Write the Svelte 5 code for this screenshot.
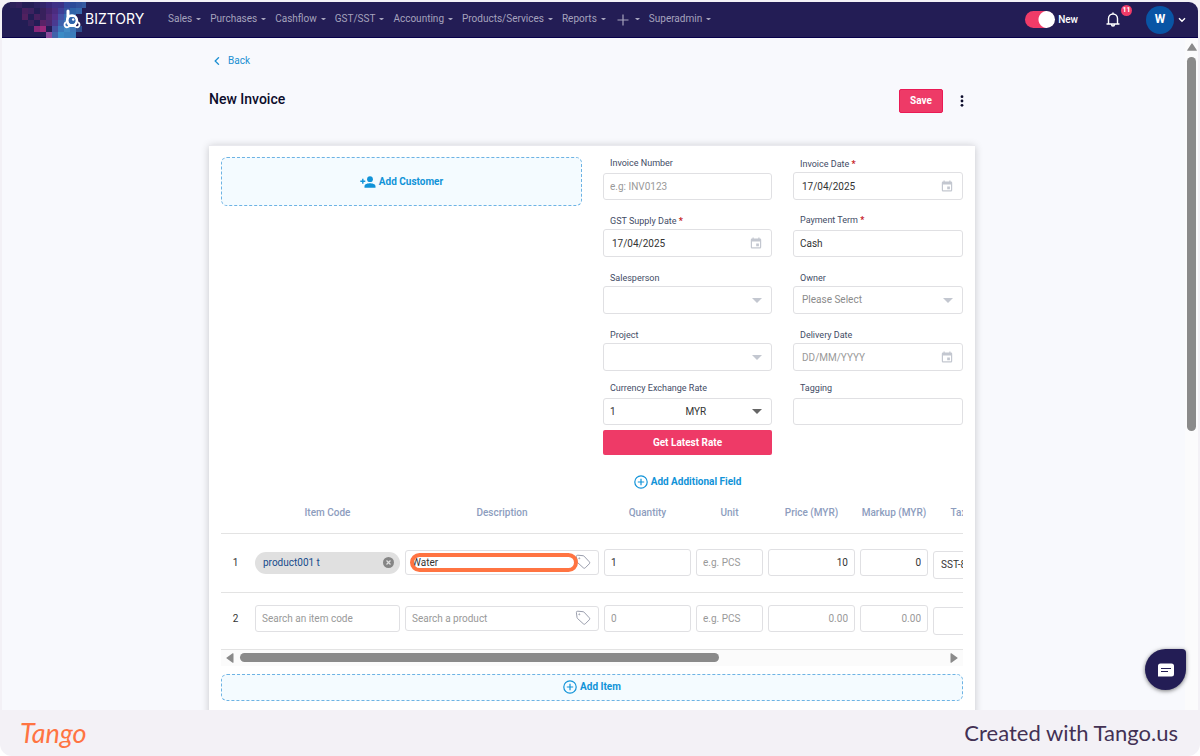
<script>
  const menus = ['Sales', 'Purchases', 'Cashflow', 'GST/SST', 'Accounting', 'Products/Services', 'Reports', '+', 'Superadmin'];

  // Mosaic behind the logo: [column, row, colour] on a 6px grid
  const mosaic = [
    [1, 0, '#2c2159'], [2, 0, '#33215d'], [5, 0, '#2b2160'], [6, 0, '#33246a'], [7, 0, '#39277a'], [8, 0, '#3f2f86'], [9, 0, '#3b3188'], [10, 0, '#33479c'], [11, 0, '#2c4b98'], [12, 0, '#32529c'], [13, 0, '#35599f'],
    [3, 1, '#47205f'], [4, 1, '#3d2260'], [6, 1, '#38215c'], [7, 1, '#45246d'], [8, 1, '#4b2c80'], [9, 1, '#403e96'], [10, 1, '#34519f'], [11, 1, '#2f63a8'], [12, 1, '#3568ac'],
    [3, 2, '#51215f'], [5, 2, '#47205f'], [6, 2, '#38215c'], [7, 2, '#51286f'], [8, 2, '#53308a'], [9, 2, '#4651a4'], [10, 2, '#356bb2'], [11, 2, '#3b74b6'],
    [4, 3, '#38215c'], [6, 3, '#5a2367'], [7, 3, '#4c286f'], [8, 3, '#493b91'], [9, 3, '#3b62ad'], [10, 3, '#3e77b8'], [11, 3, '#3b83bf'],
    [5, 4, '#862778'], [6, 4, '#9a2a7c'], [8, 4, '#4351a1'], [9, 4, '#3b78ba'], [10, 4, '#428bc5'], [11, 4, '#3e77b8'], [12, 4, '#2e4f8e'],
    [7, 5, '#8c4b9c'], [8, 5, '#4063aa'], [9, 5, '#3b8cc6'], [10, 5, '#3b83bf'], [11, 5, '#3a7dbb']
  ];

  const fields = [
    { id: 'number', label: 'Invoice Number', kind: 'text', placeholder: 'e.g: INV0123', value: '' },
    { id: 'date', label: 'Invoice Date', required: true, kind: 'date', value: '17/04/2025' },
    { id: 'supply', label: 'GST Supply Date', required: true, kind: 'date', value: '17/04/2025' },
    { id: 'term', label: 'Payment Term', required: true, kind: 'text', value: 'Cash' },
    { id: 'sales', label: 'Salesperson', kind: 'select', value: '' },
    { id: 'owner', label: 'Owner', kind: 'select', value: 'Please Select' },
    { id: 'project', label: 'Project', kind: 'select', value: '' },
    { id: 'delivery', label: 'Delivery Date', kind: 'date', placeholder: 'DD/MM/YYYY', value: '' },
    { id: 'rate', label: 'Currency Exchange Rate', kind: 'rate', value: '1' },
    { id: 'tagging', label: 'Tagging', kind: 'text', value: '' }
  ];

  const columns = ['', 'Item Code', 'Description', 'Quantity', 'Unit', 'Price (MYR)', 'Markup (MYR)', 'Tax'];
  const widths = [29, 150, 199, 92, 72, 92, 73, 56];
  const items = [
    { code: 'product001 t', description: 'Water', quantity: '1', price: '10', markup: '0', tax: 'SST-8%' },
    { code: '', description: '', quantity: '', price: '', markup: '', tax: '' }
  ];
</script>

{#snippet plusCircle()}
  <svg class="plus-circle" viewBox="0 0 14 14" aria-hidden="true">
    <circle cx="7" cy="7" r="6.2" />
    <path d="M7 3.8v6.4M3.8 7h6.4" />
  </svg>
{/snippet}

<div class="page">
  <div class="window">
    <header>
      <svg class="mosaic" viewBox="0 0 84 36" aria-hidden="true">
        {#each mosaic as [x, y, fill]}
          <rect x={x * 6 + 2} y={y * 6} width="6" height="6" {fill} />
        {/each}
      </svg>
      <a class="brand" href="#home">
        <svg viewBox="0 0 20 20" aria-hidden="true">
          <g fill="none" stroke="#fff">
            <path d="M6 2v10" stroke-width="3" stroke-linecap="round" />
            <circle cx="10" cy="11.500" r="4.800" stroke-width="2.800" />
            <path d="M4.200 13.200a2.600 2.600 0 1 0 3.200 3.600M15.800 13.200a2.600 2.600 0 1 1-3.200 3.600M6 17h8" stroke-width="1.800" />
          </g>
          <circle cx="10" cy="11.500" r="3.400" fill="#2f63ac" />
          <circle cx="11.200" cy="10.500" r="1.200" fill="#fff" />
        </svg>
        <span>BIZTORY</span>
      </a>
      <nav>
        {#each menus as menu}
          <button type="button" aria-label={menu === '+' ? 'Add' : undefined}>
            {#if menu === '+'}
              <svg class="plus" viewBox="0 0 12 12" aria-hidden="true"><path d="M6 .5v11M.5 6h11" /></svg>
            {:else}{menu}{/if}
            <i class="caret"></i>
          </button>
        {/each}
      </nav>
      <div class="tools">
        <label class="toggle"><input type="checkbox" checked /><span>New</span></label>
        <button type="button" class="bell" aria-label="Notifications">
          <svg viewBox="0 0 14 16" aria-hidden="true">
            <path d="M1 12h12M2.500 12V6.500a4.500 4.500 0 0 1 9 0V12M5.500 12.500a1.500 1.500 0 0 0 3 0M7 2V1" />
          </svg>
          <span class="badge">11</span>
        </button>
        <button type="button" class="account" aria-label="Account">
          <span class="avatar">W</span>
          <svg viewBox="0 0 8 6" aria-hidden="true"><path d="M1 1.300l3 3 3-3" /></svg>
        </button>
      </div>
    </header>

    <div class="body">
      <main>
        <a class="back" href="#back">
          <svg viewBox="0 0 6 8" aria-hidden="true"><path d="M4.900.3L1.200 4l3.700 3.700" /></svg>Back
        </a>
        <div class="title">
          <h1>New Invoice</h1>
          <button type="button" class="save">Save</button>
          <button type="button" class="more" aria-label="More">
            <svg viewBox="0 0 4 12" aria-hidden="true"><circle cx="2" cy="1.700" r="1.400" /><circle cx="2" cy="6" r="1.400" /><circle cx="2" cy="10.300" r="1.400" /></svg>
          </button>
        </div>

        <section class="card">
          <div class="top">
            <button type="button" class="dashed customer">
              <svg viewBox="0 0 16 12" aria-hidden="true">
                <circle cx="10" cy="3.200" r="2.900" />
                <path d="M4.500 11.700v-1.500C4.500 8 8 7.200 10 7.200s5.500.8 5.500 3v1.500zM2.100 2.800h1.400v1.800h1.800V6H3.500v1.800H2.100V6H.3V4.600h1.800z" />
              </svg>
              Add Customer
            </button>

            <div class="details">
              <div class="fields">
                {#each fields as field}
                  <div class="field {field.kind}">
                    <label for={field.id}>{field.label}{#if field.required}<b>{' *'}</b>{/if}</label>
                    <div class="box">
                      {#if field.kind === 'select'}
                        <select id={field.id}><option>{field.value}</option></select>
                        <i class="arrow"></i>
                      {:else if field.kind === 'rate'}
                        <input id={field.id} type="text" value={field.value} />
                        <select aria-label="Currency"><option>MYR</option></select>
                        <i class="arrow"></i>
                      {:else}
                        <input id={field.id} type="text" value={field.value} placeholder={field.placeholder} />
                        {#if field.kind === 'date'}
                          <svg class="calendar" viewBox="0 0 12 12" aria-hidden="true">
                            <path fill-rule="evenodd" d="M2.500.5h1.200v1h4.600v-1h1.200v1H10a1.200 1.200 0 0 1 1.200 1.200v7.600a1.200 1.200 0 0 1-1.200 1.200H2A1.200 1.200 0 0 1 .8 10.300V2.700A1.200 1.200 0 0 1 2 1.500h.5zM2 4.500v5.800h8V4.500zM6.200 6.500h2.700v2.700H6.200z" />
                          </svg>
                        {/if}
                      {/if}
                    </div>
                  </div>
                {/each}
              </div>
              <div class="actions">
                <button type="button" class="rate-button">Get Latest Rate</button>
                <button type="button" class="link">{@render plusCircle()}Add Additional Field</button>
              </div>
            </div>
          </div>

          <div class="items">
            <table>
              <colgroup>
                {#each widths as width}<col style="width: {width}px" />{/each}
              </colgroup>
              <thead>
                <tr>{#each columns as column}<th>{column}</th>{/each}</tr>
              </thead>
              <tbody>
                {#each items as item, i}
                  <tr>
                    <td class="index">{i + 1}</td>
                    <td>
                      {#if item.code}
                        <span class="chip">{item.code}
                          <button type="button" aria-label="Remove item">
                            <svg viewBox="0 0 10 10" aria-hidden="true"><circle cx="5" cy="5" r="5" /><path d="M3.200 3.200l3.600 3.600M6.800 3.200L3.200 6.800" /></svg>
                          </button>
                        </span>
                      {:else}
                        <input class="cell" type="text" aria-label="Item code" placeholder="Search an item code" />
                      {/if}
                    </td>
                    <td>
                      <div class="description">
                        <input class="cell" type="text" aria-label="Description" value={item.description} placeholder="Search a product" />
                        <svg class="tag" viewBox="0 0 16 16" aria-hidden="true">
                          <path d="M2.800 1.200l5.200.5a1.500 1.500 0 0 1 1 .4l5.300 5.700a1.400 1.400 0 0 1 0 2l-4 4a1.400 1.400 0 0 1-2 0L2.400 8.400a1.500 1.500 0 0 1-.4-1l-.6-4.800a1.300 1.300 0 0 1 1.400-1.400z" />
                          <circle cx="4.300" cy="4.300" r=".5" />
                        </svg>
                        {#if i === 0}<span class="highlight"></span>{/if}
                      </div>
                    </td>
                    <td><input class="cell" type="text" aria-label="Quantity" value={item.quantity} placeholder="0" /></td>
                    <td><input class="cell" type="text" aria-label="Unit" placeholder="e.g. PCS" /></td>
                    <td><input class="cell amount" type="text" aria-label="Price" value={item.price} placeholder="0.00" /></td>
                    <td><input class="cell amount" type="text" aria-label="Markup" value={item.markup} placeholder="0.00" /></td>
                    <td class="tax"><select class="cell" aria-label="Tax"><option>{item.tax}</option></select></td>
                  </tr>
                {/each}
              </tbody>
            </table>
          </div>
          <div class="hscroll" aria-hidden="true">
            <svg viewBox="0 0 8 10"><path d="M7.500.8v8.400a.6.6 0 0 1-.9.5L.8 5.600a.7.7 0 0 1 0-1.200L6.600.3a.6.6 0 0 1 .9.5z" /></svg>
            <div class="track"><div class="thumb"></div></div>
            <svg viewBox="0 0 8 10"><path d="M.5.8v8.400a.6.6 0 0 0 .9.500l5.800-4.100a.7.7 0 0 0 0-1.200L1.400.3a.6.6 0 0 0-.9.500z" /></svg>
          </div>
          <button type="button" class="dashed add">{@render plusCircle()}Add Item</button>
        </section>
      </main>

      <div class="vscroll" aria-hidden="true">
        <svg viewBox="0 0 10 8"><path d="M.8 7.800h8.400a.6.6 0 0 0 .5-.9L5.600.7a.7.7 0 0 0-1.200 0L.3 6.900a.6.6 0 0 0 .5.9z" /></svg>
        <div class="thumb"></div>
      </div>
      <button type="button" class="chat" aria-label="Chat">
        <svg viewBox="0 0 18 14" aria-hidden="true">
          <path fill="#fff" d="M3.500.5h11A2.500 2.500 0 0 1 17 3v8a2.500 2.500 0 0 1-2.500 2.500H1V3A2.500 2.500 0 0 1 3.500.5z" />
          <path stroke="#231d55" stroke-width="1" d="M4 5.500h10M4 8.500h7" />
        </svg>
      </button>
    </div>
  </div>

  <footer>
    <span class="tango">Tango</span>
    <span class="credit">Created with Tango.us</span>
  </footer>
</div>

<style>
  :global(body) { margin: 0; background: #fff; }
  * { box-sizing: border-box; }
  button, input, select { font: inherit; color: inherit; margin: 0; padding: 0; border: 0; background: none; }
  button { cursor: pointer; }
  a { text-decoration: none; }

  .page {
    display: flex; flex-direction: column; height: 100vh; padding: 2px 2px 0;
    background: #f3f1f6; border-radius: 0 0 12px 12px; overflow: hidden;
    font: 10px/12px Roboto, sans-serif; color: #333;
  }
  .window { flex: 1; min-height: 0; display: flex; flex-direction: column; border-radius: 9px 9px 0 0; overflow: hidden; background: #f8f9fd; }

  header { position: relative; flex: none; display: flex; align-items: center; height: 36px; padding: 0 12px 0 60px; background: #231d55; border-bottom: 1px solid #07004b; color: #fff; }
  .mosaic { position: absolute; left: 0; top: 0; width: 84px; height: 36px; }
  .brand { position: relative; display: flex; align-items: center; gap: 3px; width: 106px; margin-bottom: 1px; color: #fff; font: 14px/16px Inter, sans-serif; }
  .brand svg { width: 20px; height: 20px; }
  nav { display: flex; gap: 9px; margin-bottom: 2px; color: #a6a3bd; }
  nav button { display: flex; align-items: center; gap: 4px; white-space: nowrap; }
  .caret { width: 5px; border: 2px solid transparent; border-top-color: currentColor; border-bottom: 0; }
  .plus { width: 12px; height: 12px; margin: 2px 2px 0; stroke: currentColor; stroke-width: 1.2; }
  .tools { display: flex; align-items: center; margin-left: auto; font-weight: 500; }
  .toggle { display: flex; align-items: center; gap: 3px; }
  .toggle input { appearance: none; width: 30px; height: 17px; border-radius: 9px; background: radial-gradient(circle at 22px 50%, #fff 8px, #f03b68 9px); }
  .bell { position: relative; width: 14px; height: 16px; margin: 0 26px 0 28px; }
  .bell svg { width: 14px; height: 16px; fill: none; stroke: #fff; stroke-width: 1.4; stroke-linecap: round; display: block; }
  .badge { position: absolute; left: 15px; top: -7px; width: 11px; height: 11px; border-radius: 50%; background: #f03b68; font-size: 7px; line-height: 11px; font-weight: 700; }
  .account { display: flex; align-items: center; gap: 4px; }
  .avatar { width: 28px; height: 28px; border-radius: 50%; background: #0955a5; font-size: 12px; line-height: 27px; font-weight: 700; }
  .account svg { width: 8px; height: 6px; fill: none; stroke: #fff; stroke-width: 1.4; }

  .body { position: relative; flex: 1; min-height: 0; display: flex; overflow: hidden; }
  main { flex: 1; min-width: 0; max-width: 766px; margin: 0 auto; padding-top: 17px; }
  .back { display: inline-flex; align-items: center; gap: 8px; padding-left: 5px; color: #1b8fd2; }
  .back svg { width: 6px; height: 8px; fill: none; stroke: currentColor; stroke-width: 1.3; }
  .title { display: flex; align-items: center; padding: 21px 7px 0 0; margin-bottom: 32px; }
  h1 { flex: 1; margin: 0; padding-bottom: 4px; font-size: 14px; line-height: 20px; font-weight: 500; color: #0c0c2b; }
  .save { width: 44px; height: 24px; border-radius: 2px; background: #ee3a67; border: 1px solid #ea1a55; color: #fff; font-weight: 700; }
  .more { display: grid; place-items: center; width: 12px; margin-left: 13px; }
  .more svg { width: 4px; height: 12px; fill: #0c0c2b; }

  .card { padding: 11px 12px 40px; background: #fff; border: 1px solid #e9e9ee; border-width: 1px 0; box-shadow: 0 1px 8px #0003; }
  .top { display: grid; grid-template-columns: minmax(0, 361fr) minmax(0, 360fr); column-gap: 21px; align-items: start; }
  .dashed { display: flex; align-items: center; justify-content: center; gap: 3px; width: 100%; border: 1px dashed #6db3e4; border-radius: 6px; background: #f4fbff; color: #1193d8; font-weight: 700; }
  .customer { height: 49px; }
  .customer svg { width: 16px; height: 12px; fill: currentColor; }
  .fields { display: grid; grid-template-columns: minmax(0, 169fr) minmax(0, 170fr); grid-template-rows: 43px 47px 47px 47px 44px; gap: 10px 21px; align-items: end; }
  .field label { display: block; padding-left: 7px; margin-bottom: 2px; font-size: 9px; line-height: 12px; color: #434c66; white-space: pre; }
  .field b { color: #c5161d; }
  .field.text label, .field.rate label { margin-bottom: 4px; }
  .box { position: relative; display: flex; align-items: center; height: 28px; padding: 0 8px; border: 1px solid #e0e0e3; border-radius: 3px; background: #fff; }
  .text .box, .rate .box { height: 27px; padding: 0 6px; }
  .box input, .box select { flex: 1; min-width: 0; height: 24px; appearance: none; outline: 0; }
  .select .box select { color: #8b8b8b; }
  .rate .box input { flex: 77; }
  .rate .box select { flex: 68; }
  ::placeholder { color: #999; opacity: 1; }
  .calendar { width: 12px; height: 12px; margin-right: 1px; fill: #c3c7d0; }
  .arrow { width: 10px; margin-right: 1px; border: 5px solid transparent; border-top-color: #c3c7d0; border-bottom: 0; pointer-events: none; }
  .rate .arrow { margin-right: 3px; border-top-color: #666; }
  .actions { display: grid; grid-template-columns: minmax(0, 169fr) minmax(0, 170fr); column-gap: 21px; row-gap: 17px; padding-top: 5px; }
  .actions button { grid-column: 1; }
  .rate-button { height: 25px; border-radius: 2px; background: #ee3a67; color: #fff; font-weight: 700; }
  .link { display: flex; align-items: center; justify-content: center; gap: 3px; height: 20px; color: #1193d8; font-weight: 700; white-space: nowrap; }
  .plus-circle { width: 14px; height: 14px; fill: none; stroke: currentColor; stroke-width: 1.2; }

  .items { overflow: hidden; }
  table { table-layout: fixed; width: 763px; border-collapse: collapse; }
  th { height: 41px; padding: 2px 0 0 5px; font-weight: 500; color: #8d9dbe; white-space: nowrap; }
  td { height: 59px; padding: 0 0 0 5px; }
  tr { border-bottom: 1px solid #e3e3e3; }
  tbody tr:last-child td { height: 57px; padding-bottom: 4px; }
  .index { padding-left: 0; text-align: center; }
  .cell { display: block; width: 100%; height: 27px; padding: 0 6px; border: 1px solid #e0e0e3; border-radius: 3px; background: #fff; appearance: none; }
  .amount { text-align: right; }
  td.tax { padding-top: 4px; }
  .tax .cell { height: 28px; padding: 0 7px; }
  .chip { display: flex; align-items: center; justify-content: space-between; height: 22px; padding: 0 6px 0 8px; border-radius: 11px; background: #e0e0e0; color: #164b8c; }
  .chip button { display: flex; }
  .chip svg { width: 11px; height: 11px; fill: #858585; }
  .chip path { stroke: #e0e0e0; stroke-width: 1.1; }
  .description { position: relative; }
  .description .cell { height: 25px; padding-right: 26px; }
  .tag { position: absolute; right: 8px; top: 4px; width: 16px; height: 16px; fill: none; stroke: #9a9ead; }
  .highlight { position: absolute; left: 5px; right: 21px; top: 3px; bottom: 3px; border: 4px solid #ff7442; border-radius: 10px; pointer-events: none; }

  .hscroll { display: flex; align-items: center; gap: 6px; height: 16px; padding: 0 5px; background: #fbfbfb; }
  .hscroll svg { width: 8px; height: 10px; fill: #8a8a8a; }
  .track { flex: 1; }
  .hscroll .thumb { width: 68%; height: 9px; border-radius: 5px; background: #8a8a8a; }
  .add { height: 27px; margin-top: 8px; }

  .vscroll { flex: none; display: flex; flex-direction: column; align-items: center; gap: 6px; width: 16px; padding: 5px 0 0 3px; background: linear-gradient(90deg, transparent 3px, #fbfbfc 3px); }
  .vscroll svg { width: 10px; height: 8px; fill: #8a8a8a; }
  .vscroll .thumb { width: 9px; height: 56%; border-radius: 5px; background: #8a8a8a; }
  .chat { position: absolute; right: 12px; bottom: 20px; display: grid; place-items: center; width: 41px; height: 41px; border-radius: 50% 4px 50% 50%; background: #231d55; box-shadow: 0 1px 4px #0008; }
  .chat svg { width: 18px; height: 14px; }

  footer { flex: none; display: flex; align-items: center; justify-content: space-between; height: 46px; padding: 0 20px 0 18px; }
  .tango { font: italic 27px/32px Lato, sans-serif; color: #ff7442; }
  .credit { font: 22px/28px Lato, sans-serif; color: #433154; }
</style>
